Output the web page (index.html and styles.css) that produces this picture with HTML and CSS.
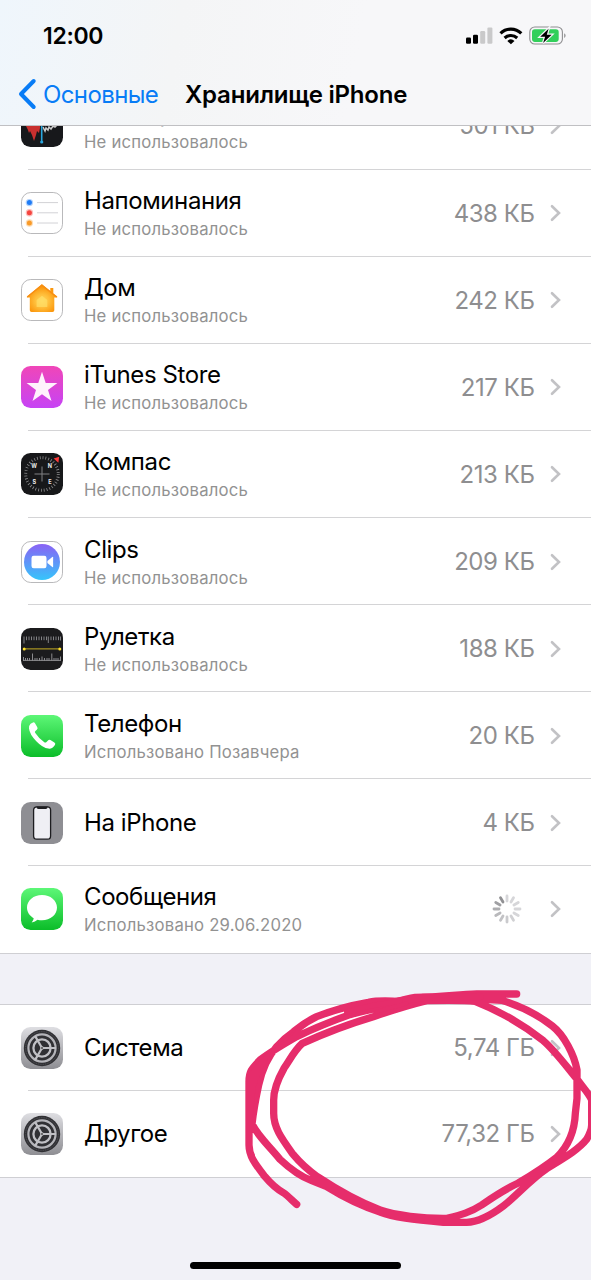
FILE: index.html
```html
<!DOCTYPE html>
<html lang="ru">
<head>
<meta charset="utf-8">
<title>Хранилище iPhone</title>
<link rel="stylesheet" href="styles.css">
</head>
<body>
<svg class="defs" width="0" height="0">
  <defs>
    <linearGradient id="green" x2="0" y2="1"><stop stop-color="#5df777"/><stop offset="1" stop-color="#0bbd29"/></linearGradient>
    <linearGradient id="pink" x2="0" y2="1"><stop stop-color="#f046b8"/><stop offset="1" stop-color="#c643f5"/></linearGradient>
    <linearGradient id="clip" x2="0" y2="1"><stop stop-color="#8a62f5"/><stop offset="1" stop-color="#35c5fb"/></linearGradient>
    <linearGradient id="silver" x2="0" y2="1"><stop stop-color="#dedee2"/><stop offset="1" stop-color="#8e8e93"/></linearGradient>
    <radialGradient id="amber" cy=".6"><stop stop-color="#ffd75a"/><stop offset=".45" stop-color="#ffbf3c"/><stop offset="1" stop-color="#fb970d"/></radialGradient>
    <symbol id="chevron" viewBox="0 0 12 20"><path d="M2 3.2 9 10l-7 6.8" fill="none" stroke="#c2c2c5" stroke-width="2.6" stroke-linecap="round" stroke-linejoin="miter"/></symbol>
    <symbol id="gear" viewBox="0 0 42 42">
      <rect width="42" height="42" rx="9.5" fill="url(#silver)"/>
      <circle cx="21" cy="21" r="18.2" fill="#303034"/>
      <circle cx="21" cy="21" r="16.4" fill="none" stroke="#55555a" stroke-width="1" stroke-dasharray="1 .8"/>
      <circle cx="21" cy="21" r="13.6" fill="none" stroke="#b4b4b9" stroke-width="2.2"/>
      <circle cx="21" cy="21" r="8.6" fill="none" stroke="#c0c0c5" stroke-width="2.3"/>
      <path d="M21 21h14M21 21l-7-12.1M21 21l-7 12.1" stroke="#c0c0c5" stroke-width="2.2"/>
      <circle cx="21" cy="21" r="1.8" fill="#c0c0c5"/><circle cx="21" cy="21" r=".9" fill="#444"/>
    </symbol>
  </defs>
</svg>
<div class="screen">
  <header class="header">
    <div class="status">
      <span class="clock">12:00</span>
      <svg class="status-icons" viewBox="0 0 102 22" width="102" height="22">
        <rect x="1" y="12.5" width="5" height="6.3" rx="1.2"/>
        <rect x="8" y="9.7" width="5" height="9.1" rx="1.2"/>
        <rect x="15.2" y="6" width="5" height="12.8" rx="1.2" fill="#c9c9ca"/>
        <rect x="22.4" y="2.4" width="5" height="16.4" rx="1.2" fill="#c9c9ca"/>
        <g fill="none" stroke="#000" stroke-width="3.1"><path d="M35.5 8.4a14.8 14.8 0 0 1 20.8 0"/><path d="M39.6 13a9.2 9.2 0 0 1 12.6 0"/></g>
        <path d="M42.3 15.9a5.4 5.4 0 0 1 7.2 0L45.9 19.3z"/>
        <rect x="64.8" y="2" width="32.6" height="17" rx="5" fill="none" stroke="#8e8e90" stroke-width="1.1"/>
        <rect x="67" y="4.2" width="26.7" height="12.7" rx="2.8" fill="#32cf5b"/>
        <path d="M99.2 8.2v4.8q1.4-.7 1.4-2.4t-1.4-2.4z" fill="#8e8e90"/>
        <path d="M83.6 3.7 75.2 11.7h4.9l-2 6.3 8.6-8.2h-4.9z" stroke="#f7f7f9" stroke-width="2.4" paint-order="stroke"/>
      </svg>
    </div>
    <div class="nav">
      <svg class="back" viewBox="0 0 19 32" width="19" height="32"><path d="M15.7 3 3 16l12.7 13" fill="none" stroke="#087cf6" stroke-width="4" stroke-linecap="round" stroke-linejoin="round"/></svg>
      <span class="back-label">Основные</span>
      <h1 class="title">Хранилище iPhone</h1>
    </div>
  </header>
  <main class="content">
    <section class="list apps">
      <div class="row">
        <svg class="icon" viewBox="0 0 42 42"><rect width="42" height="42" rx="9.5" fill="#17181b"/><path d="M5 12v9l2 4 1 3 1-2 2 4 2 6 2-6 1-4 2 2 1-5V12z" fill="#c9302f"/><path d="M22 22l2 4 1-3 2 2 1-3 2 2 2-3 2 1 2-2" fill="none" stroke="#ccc" stroke-width="1.5"/><path d="M20.7 8v28" stroke="#28a6de" stroke-width="1.6"/><circle cx="20.7" cy="37" r="1.6" fill="#28a6de"/></svg>
        <div class="body"><div class="texts"><div class="name">Диктофон</div><div class="sub">Не использовалось</div></div><span class="size">501 КБ</span><svg class="chev"><use href="#chevron"/></svg></div>
      </div>
      <div class="row">
        <svg class="icon" viewBox="0 0 42 42"><rect x=".5" y=".5" width="41" height="41" rx="9.3" fill="#fff" stroke="#b9b9bb"/><g fill="#1f7cf6"><circle cx="8.4" cy="10.6" r="3.7" opacity=".35"/><circle cx="8.4" cy="10.6" r="2.5"/></g><g fill="#f5453f"><circle cx="8.4" cy="20.8" r="3.7" opacity=".35"/><circle cx="8.4" cy="20.8" r="2.5"/></g><g fill="#f99a28"><circle cx="8.4" cy="31" r="3.7" opacity=".35"/><circle cx="8.4" cy="31" r="2.5"/></g><path d="M16 10.6h21M16 20.8h21M16 31h21" stroke="#d2d2d6" stroke-width="1"/></svg>
        <div class="body"><div class="texts"><div class="name">Напоминания</div><div class="sub">Не использовалось</div></div><span class="size">438 КБ</span><svg class="chev"><use href="#chevron"/></svg></div>
      </div>
      <div class="row">
        <svg class="icon" viewBox="0 0 42 42"><rect x=".5" y=".5" width="41" height="41" rx="9.3" fill="#fff" stroke="#b9b9bb"/><path d="M20.9 5.2 29.3 12V9h3v5.4l3.9 3.2q.5 1-.6 1h-2.3v12.6q0 1.8-1.8 1.8h-21q-1.7 0-1.7-1.8V18.6H6.5q-1.2 0-.5-1z" fill="url(#amber)"/><path d="M6.3 18 20.9 6.2 35.7 18" fill="none" stroke="#f78e14" stroke-width="1.4"/><path d="m21 16.8 5.3 4.2v7H15.6v-7z" fill="#ffe06c" opacity=".65"/></svg>
        <div class="body"><div class="texts"><div class="name">Дом</div><div class="sub">Не использовалось</div></div><span class="size">242 КБ</span><svg class="chev"><use href="#chevron"/></svg></div>
      </div>
      <div class="row">
        <svg class="icon" viewBox="0 0 42 42"><rect width="42" height="42" rx="9.5" fill="url(#pink)"/><path d="m21 5.8 3.7 11.1h11.7l-9.4 7 3.5 11.2-9.5-6.8-9.5 6.8L15 23.9l-9.4-7h11.7z" fill="#fff2fc"/></svg>
        <div class="body"><div class="texts"><div class="name">iTunes Store</div><div class="sub">Не использовалось</div></div><span class="size">217 КБ</span><svg class="chev"><use href="#chevron"/></svg></div>
      </div>
      <div class="row">
        <svg class="icon" viewBox="0 0 42 42"><rect width="42" height="42" rx="9.5" fill="#17181a"/><circle cx="21" cy="21" r="16.3" fill="none" stroke="#8e8e90" stroke-width="3" stroke-dasharray=".8 2.05"/><path d="M21 13.5v15M13.5 21h15" stroke="#818184" stroke-width="1"/><path d="m38.2 3.8-.8 6-4.7-4.4z" fill="#ff3b3b"/><g class="compass"><text x="13.2" y="14.9">W</text><text x="28.8" y="14.9">N</text><text x="13.2" y="30.5">S</text><text x="28.8" y="30.5">E</text></g></svg>
        <div class="body"><div class="texts"><div class="name">Компас</div><div class="sub">Не использовалось</div></div><span class="size">213 КБ</span><svg class="chev"><use href="#chevron"/></svg></div>
      </div>
      <div class="row">
        <svg class="icon" viewBox="0 0 42 42"><rect x=".5" y=".5" width="41" height="41" rx="9.3" fill="#fff" stroke="#b9b9bb"/><circle cx="21" cy="21" r="18" fill="url(#clip)"/><rect x="10.5" y="14.7" width="15" height="12.6" rx="2.2" fill="#fff"/><path d="m26.4 20 4.9-4.1q.8-.4.8.4v9.4q0 .8-.8.4L26.4 22z" fill="#fff"/></svg>
        <div class="body"><div class="texts"><div class="name">Clips</div><div class="sub">Не использовалось</div></div><span class="size">209 КБ</span><svg class="chev"><use href="#chevron"/></svg></div>
      </div>
      <div class="row">
        <svg class="icon" viewBox="0 0 42 42"><rect width="42" height="42" rx="9.5" fill="#1b1b1d"/><path d="M3 8.5v7M5.5 8.5v3.7M8 8.5v3.7M10.5 8.5v3.7M13 8.5v3.7M15.5 8.5v3.7M18 8.5v3.7M20.5 8.5v3.7M23 8.5v3.7M25.5 8.5v3.7M27.3 8.5v6.5M30 8.5v3.7M32.5 8.5v3.7M35 8.5v3.7M37.5 8.5v3.7M39.5 8.5v4" stroke="#8f8f91" stroke-width=".9"/><path d="M2.5 29v3.5M4.5 30v2.5M6.5 30v2.5M8.5 30v2.5M11.5 25.5v7M14 30v2.5M16 30v2.5M18.5 30v2.5M21 28.5v4M23.5 30v2.5M26 30v2.5M28 30v2.5M30.8 25.5v7M33 30v2.5M35 30v2.5M37 30v2.5M39.5 28.5v4M2 32.4h38" stroke="#99999b" stroke-width=".9"/><path d="M3 20.9h36" stroke="#c7ae24" stroke-width="1"/><circle cx="3.2" cy="20.9" r="1.5" fill="#ffe12d"/><circle cx="38.8" cy="20.9" r="1.5" fill="#ffe12d"/></svg>
        <div class="body"><div class="texts"><div class="name">Рулетка</div><div class="sub">Не использовалось</div></div><span class="size">188 КБ</span><svg class="chev"><use href="#chevron"/></svg></div>
      </div>
      <div class="row">
        <svg class="icon" viewBox="0 0 42 42"><rect width="42" height="42" rx="9.5" fill="url(#green)"/><path d="M9.6 8.8 12 7.5q1.2-.5 2 .8l2.3 4q.8 1.5-.5 2.4l-1.4 1.2q-1 .9-.1 2.2 3.6 5.6 9 9.1 1.2.8 2.2-.2l1.5-1.6q1-1.1 2.4-.3l4 2.4q1.6 1 .5 2.5-2.3 4-6.5 3.6Q21.8 32.9 15.3 26.2 8.6 19.3 8 13.5q-.2-3 1.6-4.7z" fill="#fff"/></svg>
        <div class="body"><div class="texts"><div class="name">Телефон</div><div class="sub">Использовано Позавчера</div></div><span class="size">20 КБ</span><svg class="chev"><use href="#chevron"/></svg></div>
      </div>
      <div class="row">
        <svg class="icon" viewBox="0 0 42 42"><rect width="42" height="42" rx="9.5" fill="#8e8e93"/><rect x="12.6" y="4.8" width="17" height="32.4" rx="3.2" fill="#efeff4" stroke="#1d1d20" stroke-width="1.3"/><path d="M15.3 4.5h11.5q-.4 2.6-2 2.6h-7.4q-1.7 0-2.1-2.6z" fill="#1d1d20"/></svg>
        <div class="body"><div class="texts"><div class="name">На iPhone</div></div><span class="size">4 КБ</span><svg class="chev"><use href="#chevron"/></svg></div>
      </div>
      <div class="row">
        <svg class="icon" viewBox="0 0 42 42"><rect width="42" height="42" rx="9.5" fill="url(#green)"/><path d="M21 7C12.5 7 6 12.5 6 19.6c0 4.5 2.6 8.3 6.7 10.6q-.2 2.3-2 4.2 3.4-.3 5.8-2.6 2.2.5 4.5.5c8.5 0 15-5.6 15-12.7S29.5 7 21 7z" fill="#fff"/></svg>
        <div class="body"><div class="texts"><div class="name">Сообщения</div><div class="sub">Использовано 29.06.2020</div></div>
          <svg class="spinner" viewBox="-15 -15 30 30"><g stroke-width="2.8" stroke-linecap="round" stroke="#d6d6d9"><path d="M0-8v-5"/><path d="M0-8v-5" transform="rotate(30)"/><path d="M0-8v-5" transform="rotate(60)"/><path d="M0-8v-5" transform="rotate(90)"/><path d="M0-8v-5" transform="rotate(120)"/><path d="M0-8v-5" transform="rotate(150)" stroke="#d0d0d3"/><path d="M0-8v-5" transform="rotate(180)" stroke="#cacacd"/><path d="M0-8v-5" transform="rotate(210)" stroke="#c2c2c5"/><path d="M0-8v-5" transform="rotate(240)" stroke="#b9b9bc"/><path d="M0-8v-5" transform="rotate(270)" stroke="#adadb0"/><path d="M0-8v-5" transform="rotate(300)" stroke="#a0a0a3"/><path d="M0-8v-5" transform="rotate(330)" stroke="#909093"/></g></svg>
          <svg class="chev"><use href="#chevron"/></svg></div>
      </div>
    </section>
    <section class="list system">
      <div class="row"><svg class="icon"><use href="#gear"/></svg><div class="body"><div class="texts"><div class="name">Система</div></div><span class="size">5,74 ГБ</span><svg class="chev"><use href="#chevron"/></svg></div></div>
      <div class="row"><svg class="icon"><use href="#gear"/></svg><div class="body"><div class="texts"><div class="name">Другое</div></div><span class="size">77,32 ГБ</span><svg class="chev"><use href="#chevron"/></svg></div></div>
    </section>
  </main>
  <svg class="marker" viewBox="0 0 1083 930">
    <g fill="none" stroke="#e62d6b" stroke-width="22" stroke-linecap="round" stroke-linejoin="round">
      <path d="M860 72H740C680 73 640 82 555 82C535 84 520 92 500 94C470 93 445 91 415 97Q330 112 260 140C225 156 213 168 190 186Q165 203 140 230C110 264 96 300 86 345Q72 410 66 462C85 500 115 525 150 568Q200 615 245 632L290 650Q370 700 450 726C490 742 550 749 640 757H710C745 756 780 738 820 708C860 677 900 630 950 596C1000 565 1045 540 1070 508C1078 494 1085 480 1085 465V390C1077 370 1057 350 1040 326C1010 290 975 242 940 212Q850 140 735 94Q700 90 590 92C545 103 480 123 430 140Q320 173 217 220C195 240 185 260 162 295Q131 350 131 390V430C131 475 157 508 190 554Q220 590 262 620Q365 688 450 720C495 736 580 746 650 745C690 735 720 728 755 705C805 670 835 653 865 639C900 618 945 590 980 562C1018 525 1034 480 1036 430L1041 385V300C1033 255 1002 195 967 168Q900 116 815 91C740 86 650 84 580 88C500 102 425 116 360 134Q275 164 200 200C160 223 120 247 90 270C65 296 57 305 57 335V525C57 560 78 585 105 620C130 650 145 660 160 668C175 679 188 693 200 703"/>
      <path d="M480 97L580 82L750 80"/>
      <path d="M350 126Q420 104 510 94" stroke-width="16"/>
      <path d="M440 125L530 100" stroke-width="12"/>
    </g>
    <path d="M57 310L90 270L130 235L96 300L77 350L66 462H57zM120 245L205 170L180 205z" fill="#e62d6b"/>
  </svg>
  <div class="home"></div>
</div>
</body>
</html>
```

FILE: styles.css
```css
* { box-sizing: border-box; }
body { margin: 0; background: #f1f1f7; font-family: Inter, "Liberation Sans", sans-serif; color: #000; }
.defs { position: absolute; }
.screen { position: relative; width: 591px; height: 1280px; overflow: hidden; display: flex; flex-direction: column; }
.header {
  flex: none; height: 126px; border-bottom: 1px solid #c0c0c3; display: flex; flex-direction: column;
  background: linear-gradient(100deg, #eff6fc 0, #f4f5f6 30%, #f7f7f9 60%);
}
.status { height: 65px; padding: 6px 24px 0 43px; display: flex; align-items: center; justify-content: space-between; }
.clock { font-size: 23px; font-weight: 600; letter-spacing: -.3px; }
.status-icons { display: block; }
.nav { height: 58px; padding-left: 18px; display: flex; align-items: center; white-space: nowrap; }
.back { flex: none; }
.back-label { width: 142px; padding-left: 6px; font-size: 24px; letter-spacing: -.6px; color: #087cf6; }
.title { margin: 0 0 0 6px; font-size: 24px; font-weight: 600; letter-spacing: -.2px; }
.content { flex: 1; display: flex; flex-direction: column; gap: 50px; overflow: hidden; }
.list { background: #fff; border-bottom: 1px solid #cfcfd3; flex: none; }
.list + .list { border-top: 1px solid #cfcfd3; }
.apps { margin-top: -43.6px; }
.row { height: 87.12px; padding-left: 21px; display: flex; align-items: center; background: linear-gradient(#d4d4d6, #d4d4d6) 28px 100% / 100% 1px no-repeat; }
.row:last-child { background: none; }
.apps .row:last-child { height: 86.2px; }
.system .row { height: 86.2px; }
.icon { width: 42px; height: 42px; flex: none; }
.body { flex: 1; margin-left: 21px; display: flex; align-items: center; padding-right: 29.5px; }
.texts { flex: 1; white-space: nowrap; }
.name { font-size: 24px; line-height: 30px; letter-spacing: -.4px; }
.sub { font-size: 16.7px; line-height: 21px; margin-top: 3px; letter-spacing: .21px; color: #929292; }
.size { font-size: 24px; letter-spacing: -.45px; color: #8e8e90; }
.chev { width: 12px; height: 20px; margin-left: 15px; }
.spinner { width: 30px; height: 30px; margin-right: 13px; }
.compass { font: 700 5.5px Inter, sans-serif; fill: #eee; text-anchor: middle; }
.marker { position: absolute; left: 230px; top: 970px; width: 361px; height: 310px; }
.home { position: absolute; left: 190px; top: 1262px; width: 211px; height: 7px; border-radius: 4px; background: #000; }
```
